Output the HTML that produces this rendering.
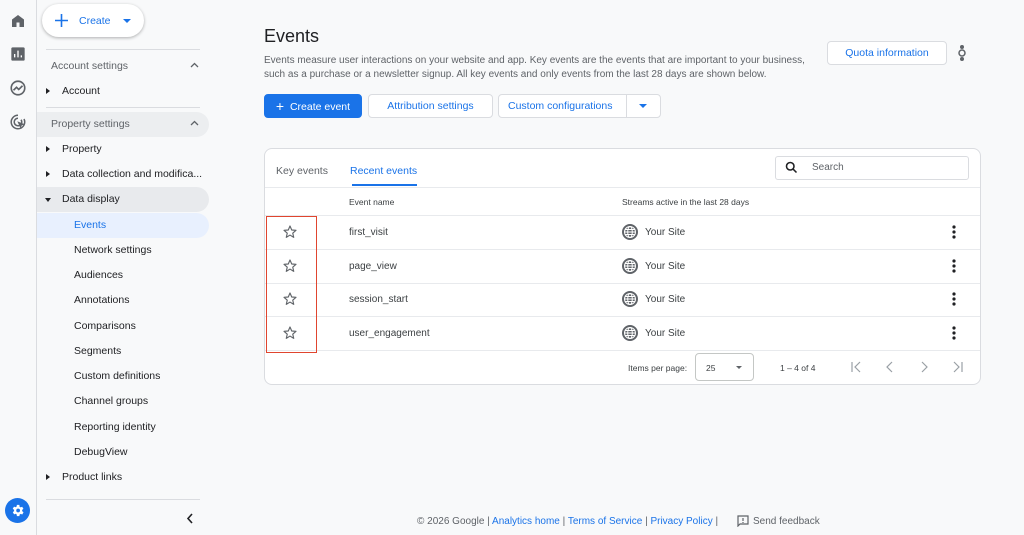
<!DOCTYPE html><html><head><style>
*{box-sizing:border-box;margin:0;padding:0}
body{width:1024px;height:535px;background:#f8f9fa;font-family:"Liberation Sans",Arial,sans-serif;color:#202124;position:relative;overflow:hidden;font-size:10px}
.a{position:absolute;white-space:nowrap}
.rail{left:0;top:0;width:37px;height:535px;border-right:1px solid #dadce0;background:#f8f9fa}
.nav{font-size:10.5px}
.hl{position:absolute;left:37px;width:172px;height:25px;border-radius:0 13px 13px 0}
.sep{position:absolute;left:46px;width:154px;height:1px;background:#dadce0}
.tri{position:absolute;width:0;height:0;border-top:3px solid transparent;border-bottom:3px solid transparent;border-left:4px solid #202124}
.btn{position:absolute;height:24px;border:1px solid #dadce0;border-radius:4px;background:#fff;color:#1a73e8;font-size:10.5px;line-height:22px;text-align:center}
.row{position:absolute;left:265px;width:715px;height:1px;background:#e8eaed}
.cell{font-size:10px;color:#3c4043}
</style></head><body>
<div class="a rail"></div>
<svg class="a" style="left:9px;top:12px" width="18" height="18" viewBox="0 0 24 24"><path d="M4 10l8-6 8 6v10h-6v-6h-4v6H4z" fill="#5f6368"/></svg>
<svg class="a" style="left:10px;top:46px" width="16" height="16" viewBox="0 0 24 24"><rect x="2" y="2" width="20" height="20" rx="2" fill="#5f6368"/><path d="M7 17v-5M12 17V7M17 17v-3" stroke="#fff" stroke-width="2"/></svg>
<svg class="a" style="left:9px;top:79px" width="18" height="18" viewBox="0 0 24 24"><circle cx="12" cy="12" r="9" fill="none" stroke="#5f6368" stroke-width="2.2"/><path d="M6 15l4-4 3 3 5-5" fill="none" stroke="#5f6368" stroke-width="2.2"/></svg>
<svg class="a" style="left:9px;top:113px" width="18" height="18" viewBox="0 0 24 24"><path d="M12 3a9 9 0 1 0 8 5M12 7a5 5 0 1 0 4 2" fill="none" stroke="#5f6368" stroke-width="2"/><path d="M11 11l10 4-4 1.5-1.5 4z" fill="#5f6368"/></svg>
<div class="a" style="left:5px;top:498px;width:25px;height:25px;border-radius:50%;background:#1a73e8"></div>
<svg class="a" style="left:10px;top:503px" width="15" height="15" viewBox="0 0 24 24"><path d="M19.4 13a7.5 7.5 0 0 0 0-2l2.1-1.6-2-3.5-2.5 1a7 7 0 0 0-1.7-1L15 3h-4l-.4 2.7a7 7 0 0 0-1.7 1l-2.5-1-2 3.5L6.6 11a7.5 7.5 0 0 0 0 2l-2.1 1.6 2 3.5 2.5-1a7 7 0 0 0 1.7 1L11 21h4l.4-2.7a7 7 0 0 0 1.7-1l2.5 1 2-3.5z" fill="#fff"/><circle cx="13" cy="12" r="3" fill="#1a73e8"/></svg>
<div class="a" style="left:42px;top:4px;width:102px;height:33px;border-radius:17px;background:#fff;box-shadow:0 1px 3px rgba(0,0,0,.3)"></div>
<svg class="a" style="left:55px;top:14px" width="13" height="13" viewBox="0 0 13 13"><path d="M6.5 0v13M0 6.5h13" stroke="#1a73e8" stroke-width="1.6"/></svg>
<div class="a" style="left:79px;top:15px;color:#1a73e8;font-size:10.5px">Create</div>
<div class="a" style="left:123px;top:19px;border-left:4px solid transparent;border-right:4px solid transparent;border-top:4px solid #1a73e8"></div>
<div class="sep" style="top:49px"></div><div class="sep" style="top:107px"></div><div class="sep" style="top:499px"></div>
<div class="hl" style="top:112px;background:#eceef0"></div>
<div class="hl" style="top:187px;background:#e8eaed"></div>
<div class="hl" style="top:213px;background:#e8f0fe"></div>
<div class="a nav" style="left:51px;top:60px;color:#5f6368">Account settings</div>
<div class="a nav" style="left:51px;top:118px;color:#5f6368">Property settings</div>
<svg class="a" style="left:190px;top:62px" width="9" height="6" viewBox="0 0 9 6"><path d="M1 5l3.5-3.5L8 5" fill="none" stroke="#5f6368" stroke-width="1.3"/></svg>
<svg class="a" style="left:190px;top:120px" width="9" height="6" viewBox="0 0 9 6"><path d="M1 5l3.5-3.5L8 5" fill="none" stroke="#5f6368" stroke-width="1.3"/></svg>
<div class="tri" style="left:46px;top:88px"></div><div class="a nav" style="left:62px;top:85px">Account</div>
<div class="tri" style="left:46px;top:146px"></div><div class="a nav" style="left:62px;top:143px">Property</div>
<div class="tri" style="left:46px;top:171px"></div><div class="a nav" style="left:62px;top:168px">Data collection and modifica...</div>
<div class="a" style="left:45px;top:198px;border-left:3px solid transparent;border-right:3px solid transparent;border-top:4px solid #202124"></div><div class="a nav" style="left:62px;top:193px">Data display</div>
<div class="a nav" style="left:74px;top:219px;color:#1a73e8">Events</div>
<div class="a nav" style="left:74px;top:244px">Network settings</div>
<div class="a nav" style="left:74px;top:269px">Audiences</div>
<div class="a nav" style="left:74px;top:294px">Annotations</div>
<div class="a nav" style="left:74px;top:320px">Comparisons</div>
<div class="a nav" style="left:74px;top:345px">Segments</div>
<div class="a nav" style="left:74px;top:370px">Custom definitions</div>
<div class="a nav" style="left:74px;top:395px">Channel groups</div>
<div class="a nav" style="left:74px;top:421px">Reporting identity</div>
<div class="a nav" style="left:74px;top:446px">DebugView</div>
<div class="tri" style="left:46px;top:474px"></div><div class="a nav" style="left:62px;top:471px">Product links</div>
<svg class="a" style="left:186px;top:513px" width="8" height="11" viewBox="0 0 8 11"><path d="M6 1L2 5.5 6 10" fill="none" stroke="#202124" stroke-width="1.6"/></svg>
<div class="a" style="left:264px;top:26px;font-size:18px;color:#202124">Events</div>
<div class="a" style="left:264px;top:54px;font-size:10px;color:#5f6368;line-height:14px">Events measure user interactions on your website and app. Key events are the events that are important to your business,<br>such as a purchase or a newsletter signup. All key events and only events from the last 28 days are shown below.</div>
<div class="btn" style="left:827px;top:41px;width:120px">Quota information</div>
<svg class="a" style="left:957px;top:43px" width="10" height="20" viewBox="0 0 10 20"><circle cx="5" cy="4" r="2" fill="#5f6368"/><circle cx="5" cy="10" r="3" fill="none" stroke="#5f6368" stroke-width="1.5"/><circle cx="5" cy="16" r="2" fill="#5f6368"/></svg>
<div class="btn" style="left:264px;top:94px;width:98px;background:#1a73e8;border-color:#1a73e8;color:#fff"><span style="font-size:14px;vertical-align:-1px">+</span>&nbsp; Create event</div>
<div class="btn" style="left:368px;top:94px;width:125px">Attribution settings</div>
<div class="btn" style="left:498px;top:94px;width:163px;text-align:left;padding-left:9px">Custom configurations</div>
<div class="a" style="left:626px;top:95px;width:1px;height:22px;background:#dadce0"></div>
<div class="a" style="left:639px;top:104px;border-left:4px solid transparent;border-right:4px solid transparent;border-top:4px solid #1a73e8"></div>
<div class="a" style="left:264px;top:148px;width:717px;height:237px;background:#fff;border:1px solid #dadce0;border-radius:8px"></div>
<div class="a" style="left:276px;top:165px;font-size:10.5px;color:#5f6368">Key events</div>
<div class="a" style="left:350px;top:165px;font-size:10.5px;color:#1a73e8">Recent events</div>
<div class="a" style="left:352px;top:184px;width:65px;height:2px;background:#1a73e8"></div>
<div class="a" style="left:775px;top:156px;width:194px;height:24px;border:1px solid #dadce0;border-radius:3px"></div>
<svg class="a" style="left:784px;top:160px" width="15" height="15" viewBox="0 0 24 24"><circle cx="10" cy="10" r="6" fill="none" stroke="#202124" stroke-width="2.5"/><path d="M14.5 14.5L20 20" stroke="#202124" stroke-width="2.5"/></svg>
<div class="a" style="left:812px;top:162px;font-size:10px;color:#5f6368">Search</div>
<div class="row" style="top:187px"></div>
<div class="a" style="left:349px;top:197px;font-size:8.5px;color:#3c4043">Event name</div>
<div class="a" style="left:622px;top:197px;font-size:8.5px;color:#3c4043">Streams active in the last 28 days</div>
<div class="row" style="top:215px"></div><div class="row" style="top:249px"></div><div class="row" style="top:283px"></div><div class="row" style="top:316px"></div><div class="row" style="top:350px"></div>
<div class="a" style="left:266px;top:216px;width:51px;height:137px;border:1.5px solid #e0452f"></div>
<div id="rows"></div>
<script>
var n=["first_visit","page_view","session_start","user_engagement"],y=[232,266,299,333],h="";
for(var i=0;i<4;i++){var t=y[i];
h+='<svg class="a" style="left:282px;top:'+(t-8)+'px" width="16" height="16" viewBox="0 0 24 24"><path d="M12 3l2.6 6 6.4.5-4.9 4.2 1.5 6.3L12 16.6 6.4 20l1.5-6.3L3 9.5 9.4 9z" fill="none" stroke="#5f6368" stroke-width="1.7" stroke-linejoin="round"/></svg>';
h+='<div class="a cell" style="left:349px;top:'+(t-5)+'px">'+n[i]+'</div>';
h+='<svg class="a" style="left:622px;top:'+(t-8)+'px" width="16" height="16" viewBox="0 0 16 16"><circle cx="8" cy="8" r="8" fill="#5f6368"/><circle cx="8" cy="8" r="5.5" fill="none" stroke="#fff" stroke-width="1"/><ellipse cx="8" cy="8" rx="2.3" ry="5.5" fill="none" stroke="#fff" stroke-width="1"/><path d="M2.5 8h11M3.5 5.5h9M3.5 10.5h9" stroke="#fff" stroke-width=".9"/></svg>';
h+='<div class="a cell" style="left:645px;top:'+(t-5)+'px">Your Site</div>';
h+='<svg class="a" style="left:952px;top:'+(t-7)+'px" width="4" height="14" viewBox="0 0 4 14"><circle cx="2" cy="2" r="1.6" fill="#202124"/><circle cx="2" cy="7" r="1.6" fill="#202124"/><circle cx="2" cy="12" r="1.6" fill="#202124"/></svg>';}
document.getElementById('rows').innerHTML=h;
</script>
<div class="a" style="left:628px;top:363px;font-size:8.5px;color:#3c4043">Items per page:</div>
<div class="a" style="left:695px;top:353px;width:59px;height:28px;border:1px solid #c4c7c5;border-radius:4px"></div>
<div class="a" style="left:706px;top:363px;font-size:8.5px;color:#3c4043">25</div>
<div class="a" style="left:736px;top:366px;border-left:3.5px solid transparent;border-right:3.5px solid transparent;border-top:3.5px solid #5f6368"></div>
<div class="a" style="left:780px;top:363px;font-size:8.5px;color:#3c4043">1 – 4 of 4</div>
<svg class="a" style="left:850px;top:361px" width="120" height="12" viewBox="0 0 120 12"><g fill="none" stroke="#9aa0a6" stroke-width="1.2"><path d="M2 1v10M10 1L5 6l5 5"/><path d="M42 1L37 6l5 5"/><path d="M72 1l5 5-5 5"/><path d="M104 1l5 5-5 5M112 1v10"/></g></svg>
<div class="a" style="left:417px;top:516px;font-size:10px;color:#5f6368">© 2026 Google | <span style="color:#1a73e8">Analytics home</span> | <span style="color:#1a73e8">Terms of Service</span> | <span style="color:#1a73e8">Privacy Policy</span> | &nbsp;</div>
<svg class="a" style="left:737px;top:515px" width="12" height="12" viewBox="0 0 12 12"><path d="M1 1h10v8H3L1 11z" fill="none" stroke="#5f6368" stroke-width="1.2"/><path d="M6 3v3M6 7v1" stroke="#5f6368" stroke-width="1.2"/></svg>
<div class="a" style="left:753px;top:516px;font-size:10px;color:#5f6368">Send feedback</div>
</body></html>
